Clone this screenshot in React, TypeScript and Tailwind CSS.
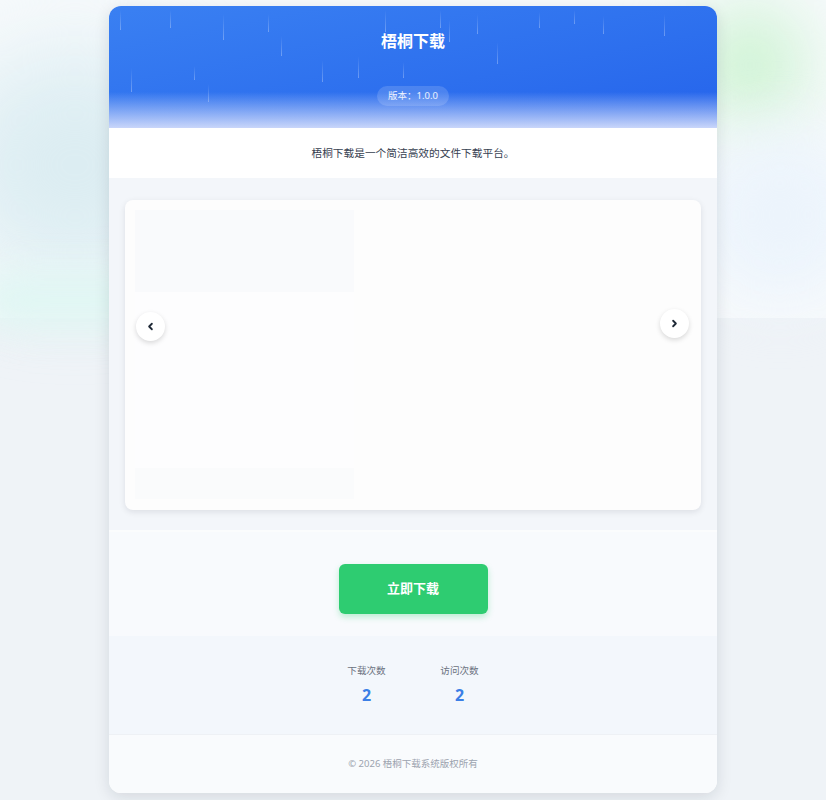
import { ChevronLeft, ChevronRight } from "lucide-react";

const RAIN = [
  { x: 11, y: 4, h: 20 },
  { x: 22, y: 62, h: 24 },
  { x: 61, y: 4, h: 18 },
  { x: 85, y: 60, h: 14 },
  { x: 99, y: 78, h: 18 },
  { x: 114, y: 8, h: 26 },
  { x: 159, y: 8, h: 18 },
  { x: 172, y: 30, h: 20 },
  { x: 213, y: 54, h: 22 },
  { x: 249, y: 50, h: 22 },
  { x: 276, y: 4, h: 22 },
  { x: 294, y: 56, h: 16 },
  { x: 331, y: 4, h: 18 },
  { x: 340, y: 14, h: 22 },
  { x: 368, y: 8, h: 20 },
  { x: 388, y: 36, h: 22 },
  { x: 430, y: 6, h: 16 },
  { x: 465, y: 4, h: 14 },
  { x: 494, y: 10, h: 18 },
  { x: 555, y: 8, h: 22 },
];

export default function App() {
  return (
    <div
      className="relative min-h-[800px] overflow-hidden bg-[#eff3f7]"
      style={{ fontFamily: '"Noto Sans", "Noto Sans CJK SC", sans-serif' }}
    >
      {/* background glow */}
      <div className="pointer-events-none absolute inset-x-0 top-0 h-[318px] bg-[#f7fafc]">
        <div className="absolute -left-[50px] top-[50px] h-[230px] w-[250px] rounded-full bg-[#dcedf2] blur-[45px]" />
        <div className="absolute -left-[20px] top-[270px] h-[60px] w-[180px] rounded-full bg-[#e0f6f3] blur-[18px]" />
        <div className="absolute left-[695px] top-[5px] h-[120px] w-[110px] rounded-full bg-[#cdf3d2] blur-[35px]" />
        <div className="absolute left-[700px] top-[130px] h-[170px] w-[160px] rounded-full bg-[#ecf4fc] blur-[30px]" />
      </div>

      <div className="relative mx-auto w-[608px] pt-[6px] pb-[7px]">
        <div className="overflow-hidden rounded-xl bg-white shadow-[0_4px_16px_rgba(15,23,42,0.12)]">
          {/* header */}
          <div className="relative flex flex-col items-center bg-gradient-to-br from-[#3a80f2] to-[#2563eb] pt-[23px] pb-[22px]">
            {RAIN.map((r, i) => (
              <div
                key={i}
                className="absolute w-px bg-gradient-to-b from-white/0 to-white/30"
                style={{ left: r.x, top: r.y, height: r.h }}
              />
            ))}
            <div className="absolute inset-x-0 bottom-0 h-[36px] bg-gradient-to-b from-[#2d6cee]/0 to-[#c9d6fa]" />
            <h1 className="relative text-base leading-6 font-bold text-white">梧桐下载</h1>
            <div className="relative mt-[33px] flex h-5 items-center rounded-full bg-white/15 px-[11px] text-[9.5px] text-white/90">
              版本：1.0.0
            </div>
          </div>

          {/* description */}
          <div className="flex h-[50px] items-center justify-center bg-white text-[10.7px] text-[#374151]">
            梧桐下载是一个简洁高效的文件下载平台。
          </div>

          {/* carousel */}
          <div className="bg-[#f3f6fa] px-4 pt-[22px] pb-[20px]">
            <div className="relative h-[310px] rounded-lg bg-[#fdfdfd] p-[10px] shadow-[0_2px_6px_rgba(15,23,42,0.10)]">
              <div className="flex h-[289px] w-[219px] flex-col justify-between bg-[#fdfdfe]">
                <div className="h-[82px] bg-[#f9fafc]" />
                <div className="h-[31px] bg-[#fafbfc]" />
              </div>
              <button className="absolute left-[11px] top-[112px] flex h-[29px] w-[29px] items-center justify-center rounded-full bg-white shadow-[0_2px_5px_rgba(0,0,0,0.15)]">
                <ChevronLeft className="h-[11px] w-[11px] text-[#1f2937]" strokeWidth={4} />
              </button>
              <button className="absolute right-[12px] top-[109px] flex h-[29px] w-[29px] items-center justify-center rounded-full bg-white shadow-[0_2px_5px_rgba(0,0,0,0.15)]">
                <ChevronRight className="h-[11px] w-[11px] text-[#1f2937]" strokeWidth={4} />
              </button>
            </div>
          </div>

          {/* download */}
          <div className="flex justify-center border-t-2 border-[#fbfcfd] bg-[#f8fafd] pt-[32px] pb-[22px]">
            <button className="flex h-[50px] w-[149px] items-center justify-center rounded-md bg-[#2ecc71] text-[13px] font-bold text-white shadow-[0_3px_6px_rgba(46,204,113,0.3)]">
              立即下载
            </button>
          </div>

          {/* stats */}
          <div className="flex h-[98px] justify-center gap-[53px] bg-[#f3f7fc] pt-[27px]">
            <div className="flex w-[40px] flex-col items-center">
              <span className="text-[9.6px] leading-4 text-[#6b7280]">下载次数</span>
              <span className="mt-[4px] text-base leading-6 font-bold text-[#3b7fe6]">2</span>
            </div>
            <div className="flex w-[40px] flex-col items-center">
              <span className="text-[9.6px] leading-4 text-[#6b7280]">访问次数</span>
              <span className="mt-[4px] text-base leading-6 font-bold text-[#3b7fe6]">2</span>
            </div>
          </div>

          {/* footer */}
          <div className="flex h-[59px] items-center justify-center border-t border-[#eef1f5] bg-[#f9fbfd] text-[9.5px] text-[#9ca3af]">
            © 2026 梧桐下载系统版权所有
          </div>
        </div>
      </div>
    </div>
  );
}
